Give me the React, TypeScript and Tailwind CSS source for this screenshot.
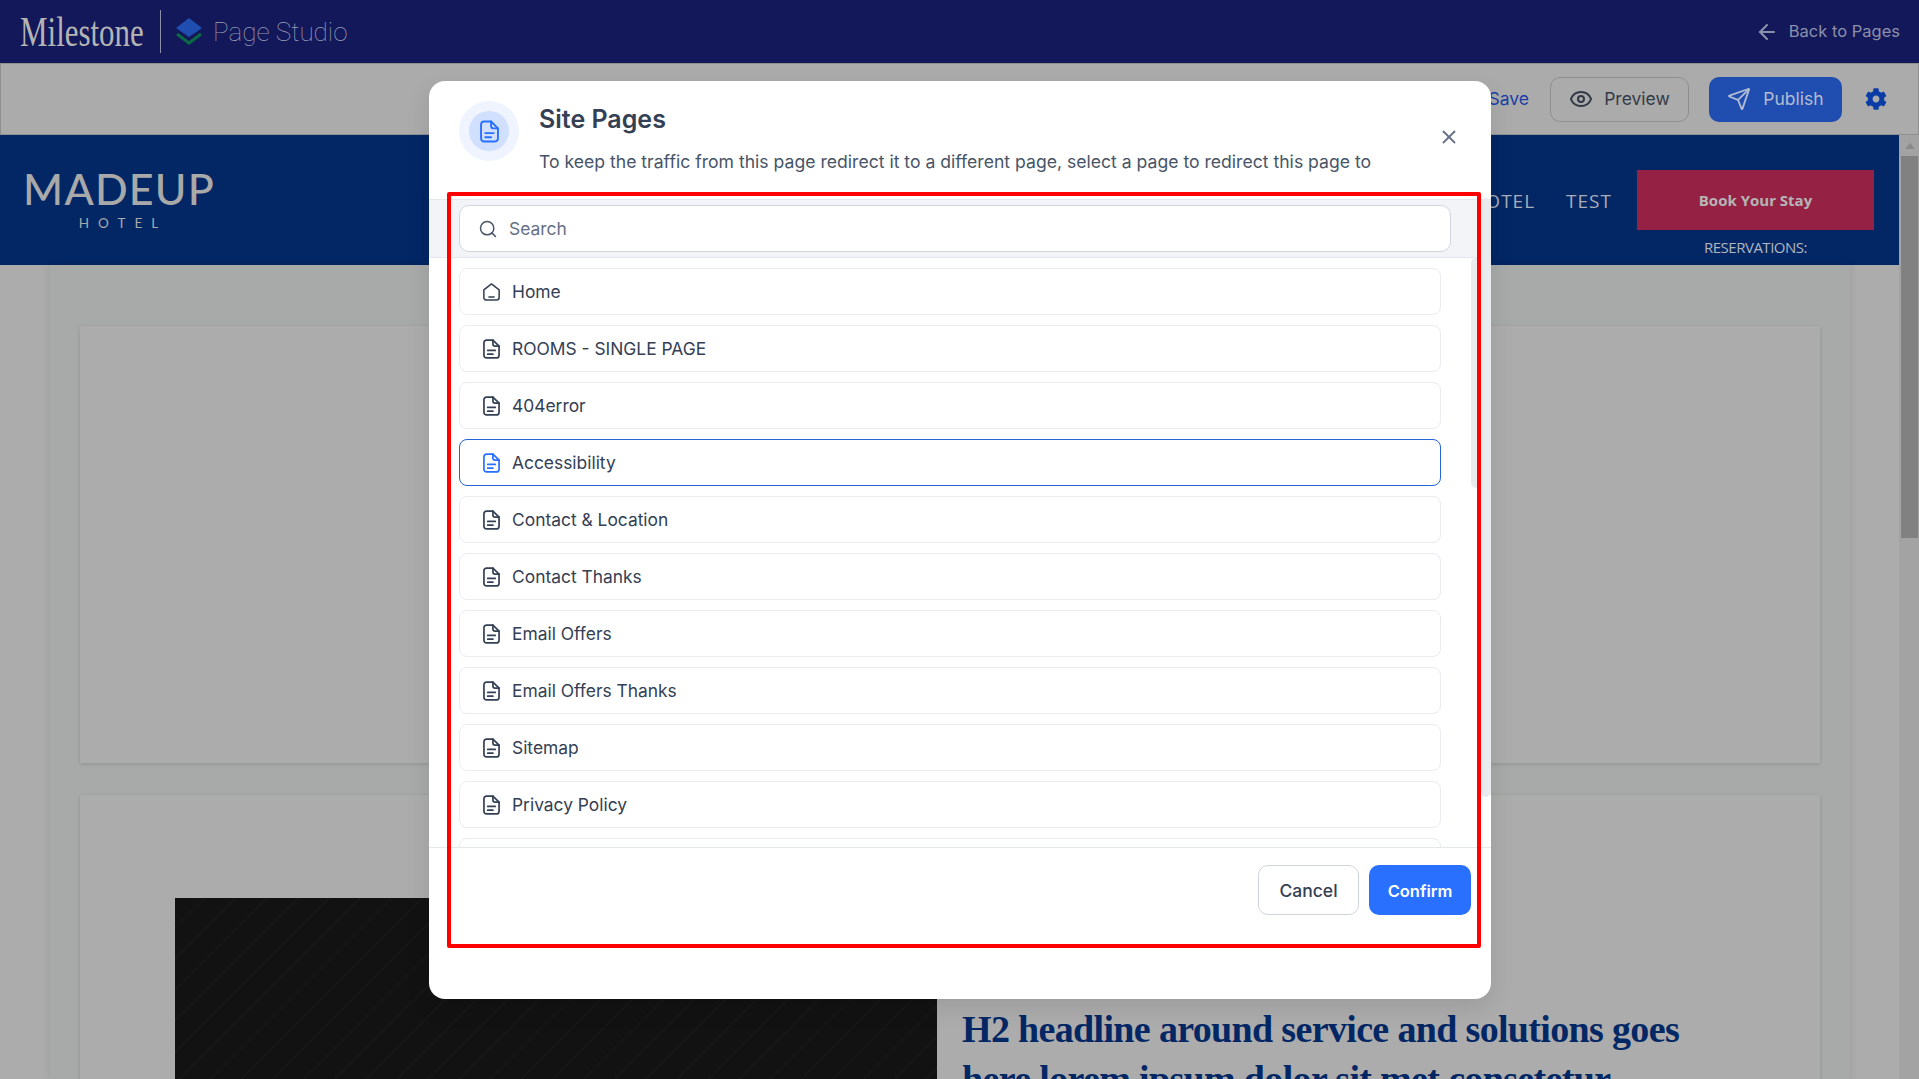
import { ArrowLeft, Eye, Send, X, Search } from "lucide-react";
import { FaCog } from "react-icons/fa";

function FileIcon({ className }: { className: string }) {
  return (
    <svg viewBox="0 0 18 21" fill="none" stroke="currentColor" strokeWidth="1.8" strokeLinecap="round" strokeLinejoin="round" className={className}>
      <path d="M3.8 1H10.5L17 7.5V17C17 18.8 15.8 20 14 20H3.8C2.1 20 1 18.8 1 17V3.8C1 2.1 2.1 1 3.8 1Z" />
      <path d="M10.5 1V5.2C10.5 6.5 11.5 7.5 12.8 7.5H17" />
      <path d="M5 12H13M5 16H10.5" />
    </svg>
  );
}

function HomeIcon({ className }: { className: string }) {
  return (
    <svg viewBox="0 0 20 21" fill="none" stroke="currentColor" strokeWidth="1.8" strokeLinecap="round" strokeLinejoin="round" className={className}>
      <path d="M1 8L10 1L19 8V17C19 18.8 17.8 20 16 20H4C2.2 20 1 18.8 1 17V8Z" />
      <path d="M7 16.5H13" />
    </svg>
  );
}

const pages = [
  "ROOMS - SINGLE PAGE",
  "404error",
  "Accessibility",
  "Contact & Location",
  "Contact Thanks",
  "Email Offers",
  "Email Offers Thanks",
  "Sitemap",
  "Privacy Policy",
];

function Row({ label, home }: { label?: string; home?: boolean }) {
  const active = label === "Accessibility";
  return (
    <div
      className={
        active
          ? "flex h-[47px] shrink-0 items-center gap-[12px] rounded-[8px] border border-[#2563d8] bg-white pl-[23px] text-[#344054]"
          : "flex h-[47px] shrink-0 items-center gap-[12px] rounded-[8px] border border-[#eaecf0] bg-white pl-[23px] text-[#344054]"
      }
    >
      {label &&
        (home ? (
          <HomeIcon className="h-[20px] w-[17px] text-[#344054]" />
        ) : (
          <FileIcon className={active ? "h-[20px] w-[17px] text-[#2970ff]" : "h-[20px] w-[17px] text-[#344054]"} />
        ))}
      {label && <span className="pt-[1px] text-[17.4px] leading-none">{label}</span>}
    </div>
  );
}

export default function App() {
  return (
    <div className="relative flex h-[1079px] w-[1919px] flex-col overflow-hidden bg-[#acacac] font-['Inter',sans-serif]">
      <header className="flex h-[63px] shrink-0 items-center justify-between bg-[#12185a] pl-[20px] pr-[19px]">
        <div className="flex items-center">
          <span className="w-[124px] origin-left scale-x-[0.72] font-['Liberation_Serif',serif] text-[43px] leading-none whitespace-nowrap text-[#b4b4b4]">
            Milestone
          </span>
          <div className="ml-[16px] h-[43px] w-px bg-[#8b8fa8]" />
          <svg viewBox="0 0 26 27" className="ml-[15px] h-[27px] w-[26px]">
            <path d="M13 0L26 10L13 19L0 10Z" fill="#1f4eb0" />
            <path d="M1 16L13 25L25 16" fill="none" stroke="#0a6a44" strokeWidth="3" />
          </svg>
          <span className="ml-[11px] font-['Roboto',sans-serif] text-[26px] font-thin leading-none text-[#9a9eb4]">Page Studio</span>
        </div>
        <div className="flex items-center gap-[10px] text-[#8c90aa]">
          <ArrowLeft className="h-[24px] w-[24px]" strokeWidth={2} />
          <span className="text-[16.5px]">Back to Pages</span>
        </div>
      </header>

      <div className="flex h-[72px] shrink-0 items-center justify-end gap-[20px] border-x border-y border-[#8f8f8f] bg-[#ababab] pr-[31px]">
        <span className="mr-[1px] text-[17.5px] text-[#1a3fa6]">Save</span>
        <div className="flex h-[45px] w-[139px] items-center justify-center gap-[11px] rounded-[10px] border border-[#8e8e8e] text-[#333a47]">
          <Eye className="h-[24px] w-[24px]" strokeWidth={2} />
          <span className="text-[17.5px]">Preview</span>
        </div>
        <div className="flex h-[45px] w-[133px] items-center justify-center gap-[12px] rounded-[10px] bg-[#1f4eb0] text-[#b3bcd4]">
          <Send className="h-[24px] w-[24px]" strokeWidth={1.8} />
          <span className="text-[17.5px]">Publish</span>
        </div>
        <FaCog className="ml-[3px] h-[22px] w-[22px] text-[#0a3ca6]" />
      </div>

      <div className="flex min-h-0 flex-1">
        <main className="min-w-0 flex-1 overflow-hidden">
          <div className="flex h-[130px] items-center justify-between bg-[#032765] pl-[25px] pr-[25px]">
            <div className="flex w-[188px] flex-col items-center text-[#a9a9a9]">
              <span className="font-['Lato',sans-serif] text-[43px] leading-[40px] font-medium tracking-[1.2px] whitespace-nowrap">MADEUP</span>
              <span className="mt-[8px] pl-[8px] font-['Lato',sans-serif] text-[13.5px] leading-none tracking-[9px]">HOTEL</span>
            </div>
            <div className="flex items-start self-stretch">
              <nav className="mt-[57px] flex gap-[31px] font-['Open_Sans',sans-serif] text-[19px] leading-none tracking-[1px] text-[#a9adb8]">
                <span>HOTEL</span>
                <span>TEST</span>
              </nav>
              <div className="ml-[25px] flex w-[237px] flex-col items-center pt-[35px]">
                <div className="flex h-[60px] w-full items-center justify-center bg-[#952245] font-['Open_Sans',sans-serif] text-[15px] font-bold text-[#b5b5b5]">
                  Book Your Stay
                </div>
                <span className="mt-[7px] font-['Open_Sans',sans-serif] text-[15px] leading-[20px] tracking-[-0.5px] text-[#b0b5c0]">RESERVATIONS:</span>
              </div>
            </div>
          </div>
          <div className="bg-[#acacac] pl-[50px] pr-[49px]">
            <div className="h-[814px] bg-[#a8aaa9] px-[30px] pt-[61px] shadow-[0_0_8px_rgba(0,0,0,0.1)]">
              <div className="h-[437px] bg-[#acacac] shadow-[0_1px_4px_rgba(0,0,0,0.14)]" />
              <div className="mt-[32px] flex h-[420px] bg-[#acacac] pl-[95px] pt-[103px] shadow-[0_1px_4px_rgba(0,0,0,0.14)]">
                <div className="h-[300px] w-[762px] shrink-0 bg-[#121212] bg-[repeating-linear-gradient(135deg,#121212_0,#121212_20px,#191919_21px,#121212_22px)]" />
                <h2 className="mt-[106px] ml-[25px] w-[750px] font-['Liberation_Serif',serif] text-[38px] leading-[50px] font-bold tracking-[-0.66px] text-[#032765]">
                  H2 headline around service and solutions goes here lorem ipsum dolor sit met consetetur
                </h2>
              </div>
            </div>
          </div>
        </main>
        <div className="w-[20px] shrink-0 bg-[#a3a3a3] pl-[2px] pr-[1px]">
          <div className="flex h-[21px] items-center justify-center">
            <div className="h-0 w-0 border-x-[5px] border-b-[6px] border-x-transparent border-b-[#8a8a8a]" />
          </div>
          <div className="h-[382px] bg-[#818181]" />
        </div>
      </div>

      {/* Site Pages dialog */}
      <div className="absolute top-[81px] left-[429px] flex h-[918px] w-[1062px] flex-col overflow-hidden rounded-[16px] bg-white shadow-[0_8px_24px_rgba(0,0,0,0.1)]">
        <div className="relative flex h-[118px] shrink-0 pt-[20px] pl-[30px]">
          <div className="flex h-[60px] w-[60px] shrink-0 items-center justify-center rounded-full bg-[#eff4ff]">
            <div className="flex h-[40px] w-[40px] items-center justify-center rounded-full bg-[#d1e0ff]">
              <FileIcon className="h-[23px] w-[19px] text-[#2970ff]" />
            </div>
          </div>
          <div className="ml-[20px]">
            <h1 className="text-[25px] leading-[36px] font-semibold text-[#344054]">Site Pages</h1>
            <p className="mt-[13px] text-[17.6px] leading-[24px] text-[#475467]">
              To keep the traffic from this page redirect it to a different page, select a page to redirect this page to
            </p>
          </div>
          <X className="absolute top-[45px] right-[31px] h-[22px] w-[22px] text-[#667085]" strokeWidth={2} />
        </div>

        <div className="flex h-[59px] shrink-0 items-center border-y border-[#e4e7ec] bg-[#f2f4f7] pl-[30px] pr-[40px]">
          <div className="flex h-[47px] w-full items-center gap-[11px] rounded-[10px] border border-[#d0d5dd] bg-white pl-[18px]">
            <Search className="h-[20px] w-[20px] text-[#475467]" strokeWidth={1.8} />
            <span className="pt-[1px] text-[17.4px] text-[#667085]">Search</span>
          </div>
        </div>

        <div className="relative flex h-[589px] shrink-0 flex-col gap-[10px] overflow-hidden pt-[10px] pl-[30px] pr-[50px]">
          <Row label="Home" home />
          {pages.map((p) => (
            <Row key={p} label={p} />
          ))}
          <Row />
          <div className="absolute top-0 right-[10px] h-[230px] w-[10px] rounded-[5px] bg-[#e9ebef]" />
        </div>

        <div className="flex flex-1 items-start justify-end gap-[10px] border-t border-[#e4e7ec] pt-[17px] pr-[20px]">
          <button className="h-[50px] w-[101px] rounded-[10px] border border-[#d0d5dd] bg-white pt-[2px] text-[17.5px] font-medium text-[#344054]">Cancel</button>
          <button className="h-[50px] w-[102px] rounded-[10px] bg-[#2970ff] pt-[2px] text-[16.5px] font-semibold text-white">Confirm</button>
        </div>

        <div className="absolute top-[117px] right-0 h-[599px] w-[10px] rounded-[5px] bg-[#e9ebef]" />
      </div>

      {/* Annotation rectangle */}
      <div className="pointer-events-none absolute top-[192px] left-[447px] h-[756px] w-[1034px] rounded-[2px] border-[4px] border-[#ff0000]" />
    </div>
  );
}
